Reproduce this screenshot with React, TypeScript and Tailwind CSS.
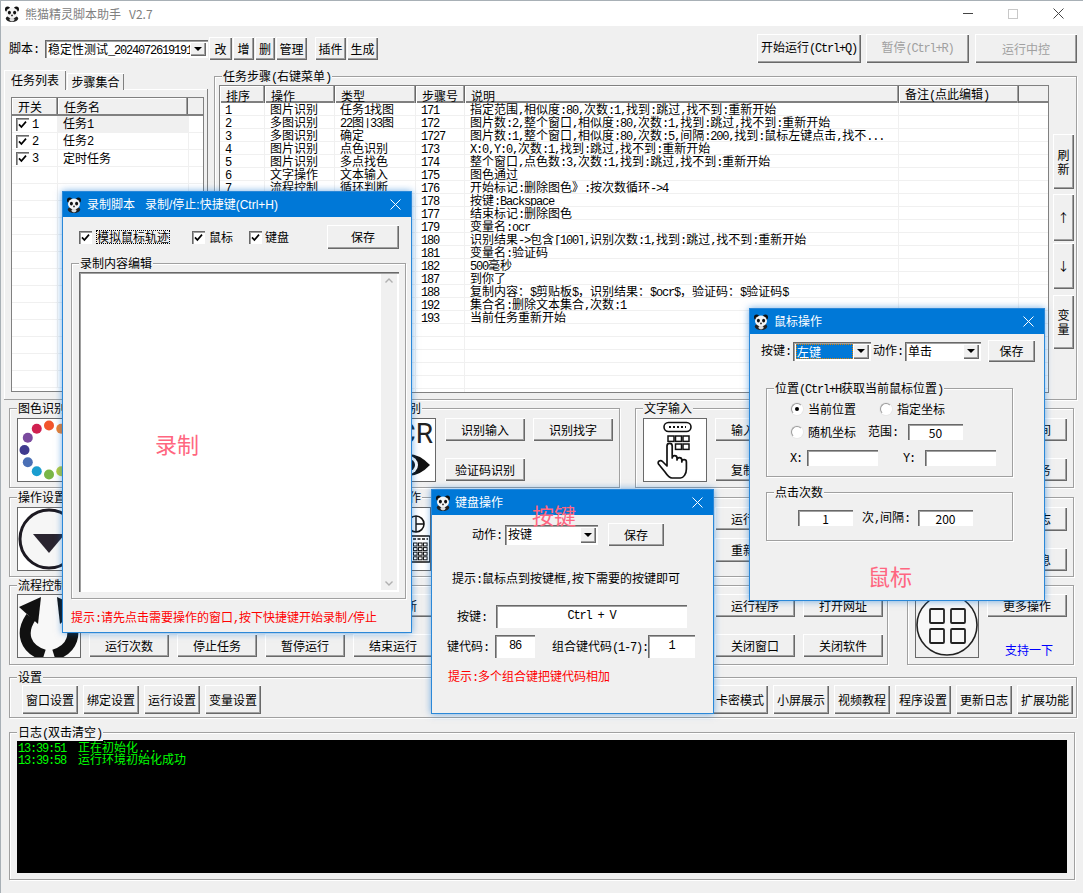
import type { ReactNode } from "react";

const mono = "font-['Liberation_Mono',monospace] text-[12px] tracking-[-1.2px]";
const raised =
  "shadow-[inset_1px_1px_0_#fff,inset_-1px_-1px_0_#696969,inset_-2px_-2px_0_#a0a0a0]";
const sunken =
  "shadow-[inset_1px_1px_0_#696969,inset_2px_2px_0_#a0a0a0,inset_-1px_-1px_0_#fff]";

function Txt({ s }: { s: string }) {
  const parts = s.split(/([\x20-\x7e]+)/);
  return (
    <span className="whitespace-pre">
      {parts.map((p, i) =>
        /^[\x20-\x7e]+$/.test(p) ? (
          <span key={i} className={mono}>
            {p}
          </span>
        ) : (
          <span key={i}>{p}</span>
        )
      )}
    </span>
  );
}

function Btn({
  label,
  className = "",
  disabled = false,
}: {
  label: string;
  className?: string;
  disabled?: boolean;
}) {
  return (
    <div
      className={`flex shrink-0 items-center justify-center whitespace-nowrap bg-[#f0f0f0] pb-[1px] leading-[13px] ${raised} ${
        disabled ? "text-[#a0a0a0]" : "text-black"
      } ${className}`}
    >
      <Txt s={label} />
    </div>
  );
}

function StackBtn({ label, className = "" }: { label: string; className?: string }) {
  return (
    <div className={`flex shrink-0 items-center justify-center bg-[#f0f0f0] ${raised} ${className}`}>
      <span className="w-[12px] leading-[14px]">{label}</span>
    </div>
  );
}

function Group({
  title,
  className = "",
  children,
}: {
  title: string;
  className?: string;
  children?: ReactNode;
}) {
  return (
    <div
      className={`relative shrink-0 border border-[#a0a0a0] shadow-[1px_1px_0_#fff,inset_1px_1px_0_#fff] ${className}`}
    >
      {title && (
        <span className="absolute left-[7px] top-[-8px] whitespace-nowrap bg-[#f0f0f0] px-[1px] leading-[14px]">
          <Txt s={title} />
        </span>
      )}
      {children}
    </div>
  );
}

function IconBox({ children }: { children: ReactNode }) {
  return (
    <div className="relative h-[64px] w-[64px] shrink-0 overflow-hidden border border-[#696969] bg-white">
      {children}
    </div>
  );
}

function Panda({ className = "h-[16px] w-[16px]" }: { className?: string }) {
  return (
    <svg viewBox="0 0 16 16" className={`shrink-0 ${className}`}>
      <circle cx="3.6" cy="3.2" r="2.6" fill="#111" />
      <circle cx="12.4" cy="3.2" r="2.6" fill="#111" />
      <ellipse cx="8" cy="12.6" rx="6.2" ry="3.4" fill="#222" />
      <ellipse cx="8" cy="7" rx="6" ry="5.4" fill="#f4f4f4" />
      <ellipse cx="5.4" cy="6.6" rx="1.5" ry="1.9" fill="#111" />
      <ellipse cx="10.6" cy="6.6" rx="1.5" ry="1.9" fill="#111" />
      <circle cx="8" cy="9.4" r="0.9" fill="#222" />
      <ellipse cx="8" cy="13.6" rx="2.6" ry="1.8" fill="#ddd" />
    </svg>
  );
}

function CloseX({ className = "stroke-white" }: { className?: string }) {
  return (
    <svg viewBox="0 0 11 11" className={`h-[11px] w-[11px] ${className}`} strokeWidth="1">
      <path d="M0.5 0.5 L10.5 10.5 M10.5 0.5 L0.5 10.5" />
    </svg>
  );
}

function Check() {
  return (
    <div className={`flex h-[13px] w-[13px] shrink-0 items-center justify-center bg-white ${sunken}`}>
      <svg viewBox="0 0 9 9" className="h-[9px] w-[9px]" fill="none" stroke="#000" strokeWidth="1.7">
        <path d="M1 4.4 L3.4 7 L8 1.6" />
      </svg>
    </div>
  );
}

function Radio({ on = false }: { on?: boolean }) {
  return (
    <div className="flex h-[12px] w-[12px] shrink-0 items-center justify-center rounded-full border border-[#9a9a9a] border-b-white border-r-white bg-white shadow-[0_0_0_1px_#e8e8e8]">
      {on && <div className="h-[4px] w-[4px] rounded-full bg-black" />}
    </div>
  );
}

function Combo({
  text,
  className = "",
  selected = false,
}: {
  text: string;
  className?: string;
  selected?: boolean;
}) {
  return (
    <div className={`flex shrink-0 items-stretch bg-white p-[2px] ${sunken} ${className}`}>
      <div className="min-w-0 flex-1 overflow-x-clip whitespace-nowrap pl-[1px] leading-[14px]">
        {selected ? (
          <div className="h-full border border-dotted border-[#e08000] bg-[#0078d7] leading-[13px] text-white">
            <Txt s={text} />
          </div>
        ) : (
          <Txt s={text} />
        )}
      </div>
      <div className={`flex w-[16px] shrink-0 items-center justify-center bg-[#f0f0f0] ${raised}`}>
        <svg viewBox="0 0 8 4" className="h-[4px] w-[8px]">
          <path d="M0 0 H8 L4 4 Z" fill="#000" />
        </svg>
      </div>
    </div>
  );
}

function Field({ text = "", className = "", mon = false }: { text?: string; className?: string; mon?: boolean }) {
  return (
    <div className={`flex shrink-0 items-center justify-center whitespace-pre bg-white leading-[13px] ${sunken} ${mon ? mono : ""} ${className}`}>
      {text}
    </div>
  );
}

function Dialog({
  title,
  className = "",
  children,
  iconGap = "ml-[5px]",
}: {
  title: ReactNode;
  className?: string;
  children: ReactNode;
  iconGap?: string;
}) {
  return (
    <div
      className={`absolute flex flex-col border border-[#2b88d8] bg-[#f0f0f0] shadow-[0_0_7px_rgba(0,110,210,0.55)] ${className}`}
    >
      <div className="flex h-[25px] shrink-0 items-center bg-[#0078d7] pl-[3px] pr-[10px] text-white">
        <Panda />
        <div className={`flex-1 whitespace-pre font-['Liberation_Sans','Noto_Sans_CJK_SC',sans-serif] ${iconGap}`}>{title}</div>
        <CloseX />
      </div>
      {children}
    </div>
  );
}

const steps: [string, string, string, string, string][] = [
  ["1", "图片识别", "任务1找图", "171", "指定范围,相似度:80,次数:1,找到:跳过,找不到:重新开始"],
  ["2", "多图识别", "22图|33图", "172", "图片数:2,整个窗口,相似度:80,次数:1,找到:跳过,找不到:重新开始"],
  ["3", "多图识别", "确定", "1727", "图片数:1,整个窗口,相似度:80,次数:5,间隔:200,找到:鼠标左键点击,找不..."],
  ["4", "图片识别", "点色识别", "173", "X:0,Y:0,次数:1,找到:跳过,找不到:重新开始"],
  ["5", "图片识别", "多点找色", "174", "整个窗口,点色数:3,次数:1,找到:跳过,找不到:重新开始"],
  ["6", "文字操作", "文本输入", "175", "图色通过"],
  ["7", "流程控制", "循环判断", "176", "开始标记:删除图色》:按次数循环->4"],
  ["8", "键鼠操作", "按键", "178", "按键:Backspace"],
  ["9", "流程控制", "循环判断", "177", "结束标记:删除图色"],
  ["10", "变量操作", "变量", "179", "变量名:ocr"],
  ["11", "文字识别", "识别", "180", "识别结果->包含[100],识别次数:1,找到:跳过,找不到:重新开始"],
  ["12", "变量操作", "变量", "181", "变量名:验证码"],
  ["13", "等待", "等待", "182", "500毫秒"],
  ["14", "文字操作", "文本", "187", "到你了"],
  ["15", "文字操作", "复制", "188", "复制内容：$剪贴板$，识别结果：$ocr$，验证码：$验证码$"],
  ["16", "集合", "集合", "192", "集合名:删除文本集合,次数:1"],
  ["17", "流程控制", "重新开始", "193", "当前任务重新开始"],
];

const stepCols = "grid grid-cols-[45px_70px_81px_49px_434px_120px_1fr]";
const headCell =
  "flex items-center border-r border-r-[#696969] pl-[6px] pt-[1px] leading-[13px] shadow-[inset_-1px_0_0_#a0a0a0,inset_1px_1px_0_#fff]";
const bodyCell = "overflow-hidden whitespace-nowrap border-r border-[#f0f0f0] pl-[5px]";

function StepTable() {
  const blanks = Array.from({ length: 6 });
  return (
    <div className="flex h-[308px] w-[830px] shrink-0 flex-col overflow-hidden border border-[#808080] bg-white">
      <div className={`${stepCols} h-[17px] shrink-0 border-b-2 border-b-[#808080] bg-[#f0f0f0]`}>
        {["排序", "操作", "类型", "步骤号", "说明"].map((h) => (
          <div key={h} className={headCell}>
            {h}
          </div>
        ))}
        <div className={headCell}>
          <Txt s="备注(点此编辑)" />
        </div>
        <div />
      </div>
      {steps.map((r) => (
        <div key={r[0]} className={`${stepCols} h-[13px] shrink-0 border-b border-[#f0f0f0] leading-[12px]`}>
          {r.map((c, i) => (
            <div key={i} className={bodyCell}>
              <Txt s={c} />
            </div>
          ))}
          <div className={bodyCell} />
          <div />
        </div>
      ))}
      {blanks.map((_, i) => (
        <div key={i} className={`${stepCols} h-[13px] shrink-0 border-b border-[#f0f0f0]`}>
          <div className={bodyCell} />
          <div className={bodyCell} />
          <div className={bodyCell} />
          <div className={bodyCell} />
          <div className={bodyCell} />
          <div className={bodyCell} />
          <div />
        </div>
      ))}
    </div>
  );
}

function TaskList() {
  const rows = [
    { n: "1", t: "任务1", on: true },
    { n: "2", t: "任务2", on: true },
    { n: "3", t: "定时任务", on: true },
  ];
  const blanks = Array.from({ length: 13 });
  const cols = "grid grid-cols-[46px_130px_1fr]";
  return (
    <div className="ml-[7px] mt-[8px] flex h-[295px] w-[193px] flex-col overflow-hidden border border-[#808080] bg-white">
      <div className={`${cols} h-[18px] shrink-0 border-b-2 border-b-[#808080] bg-[#f0f0f0]`}>
        <div className={headCell}>开关</div>
        <div className={headCell}>
          <Txt s="任务名" />
        </div>
        <div />
      </div>
      {rows.map((r, i) => (
        <div key={r.n} className={`${cols} h-[17px] shrink-0 border-b border-[#f0f0f0]`}>
          <div className="flex items-center border-r border-[#f0f0f0] pl-[4px]">
            <Check />
            <span className="ml-[3px]">
              <Txt s={r.n} />
            </span>
          </div>
          <div className={`flex items-center pl-[5px] ${i === 0 ? "bg-[#f0f0f0]" : ""}`}>
            <Txt s={r.t} />
          </div>
          <div className="border-l border-[#f0f0f0]" />
        </div>
      ))}
      {blanks.map((_, i) => (
        <div key={i} className={`${cols} h-[17px] shrink-0 border-b border-[#f0f0f0]`}>
          <div className="border-r border-[#f0f0f0]" />
          <div />
          <div className="border-l border-[#f0f0f0]" />
        </div>
      ))}
    </div>
  );
}

function ColorWheel() {
  const colors = [
    "#f2552c",
    "#f0802e",
    "#f5b82c",
    "#e8e040",
    "#c8d840",
    "#b5cc3c",
    "#7ab648",
    "#1a9ed0",
    "#4a6fb5",
    "#3f3a8f",
    "#7a4a9e",
    "#d02050",
  ];
  return (
    <svg viewBox="0 0 62 62" className="h-full w-full">
      {colors.map((c, i) => {
        const a = (i * Math.PI) / 6;
        return <circle key={c} cx={31 + 24.5 * Math.sin(a)} cy={31 - 24.5 * Math.cos(a)} r="5" fill={c} />;
      })}
    </svg>
  );
}

function OpIcon() {
  return (
    <svg viewBox="0 0 62 62" className="h-full w-full">
      <circle cx="31" cy="31" r="29" fill="#f6f6f6" stroke="#1d1a22" strokeWidth="3" />
      <path d="M15 26 H47 L31 45 Z" fill="#2a2530" />
    </svg>
  );
}

function FlowIcon() {
  return (
    <svg viewBox="0 0 62 62" className="h-full w-full bg-[#f8f8f8]">
      <g fill="none" stroke="#111" strokeWidth="11">
        <path d="M13 22 C2 38 7 54 26 60" />
        <path d="M49 22 C60 38 55 54 36 60" />
      </g>
      <path d="M1 12 L23 2 L20 29 Z" fill="#111" />
      <path d="M61 12 L39 2 L42 29 Z" fill="#111" />
    </svg>
  );
}

function OcrIcon() {
  return (
    <>
      <div className="absolute right-[2px] top-[-1px] font-['Roboto',sans-serif] text-[28px] leading-[32px] text-[#222]">
        OCR
      </div>
      <svg viewBox="0 0 62 62" className="absolute left-0 top-0 h-full w-full">
        <path d="M12 46 Q36 24 57 46 Q36 68 12 46 Z" fill="#111" />
        <circle cx="36" cy="46" r="9" fill="#fff" />
        <circle cx="36" cy="46" r="6" fill="#111" />
      </svg>
    </>
  );
}

function MouseKeysIcon() {
  const cells = Array.from({ length: 12 });
  return (
    <svg viewBox="0 0 62 62" className="h-full w-full">
      <circle cx="48" cy="16" r="8" fill="#fff" stroke="#111" strokeWidth="1.6" />
      <path d="M48 8 V24 M48 16 H56" stroke="#111" strokeWidth="1.4" />
      <rect x="43" y="28" width="19" height="26" rx="1" fill="#fff" stroke="#111" strokeWidth="1.6" />
      <path d="M45 31 H60" stroke="#111" strokeWidth="1.6" strokeDasharray="3 1.5" />
      {cells.map((_, i) => (
        <rect
          key={i}
          x={45.5 + (i % 3) * 5}
          y={35 + Math.floor(i / 3) * 4.6}
          width="3.6"
          height="3"
          fill="none"
          stroke="#111"
          strokeWidth="1"
        />
      ))}
    </svg>
  );
}

function HandKeypad() {
  return (
    <svg viewBox="0 0 62 62" className="h-full w-full">
      <rect x="20" y="3.5" width="27" height="9" rx="4.5" fill="none" stroke="#111" strokeWidth="1.6" />
      <path d="M25 8 H42" stroke="#111" strokeWidth="2" strokeDasharray="2 2" />
      <g fill="none" stroke="#111" strokeWidth="1.5">
        <rect x="24" y="17" width="6" height="5.4" />
        <rect x="31.5" y="17" width="6" height="5.4" />
        <rect x="39" y="17" width="6" height="5.4" />
        <rect x="31.5" y="25" width="6" height="5.4" />
        <rect x="39" y="25" width="6" height="5.4" />
      </g>
      <path
        d="M23 47 V27 a2.6 2.6 0 0 1 5.2 0 V39 a2.4 2.4 0 0 1 4.8 0 V41 a2.4 2.4 0 0 1 4.8 0 V43 a2.3 2.3 0 0 1 4.6 0 V50 c0 5 -3 9 -6 9 H28 c-3 0 -5 -3 -7 -6 L14.5 45 c-1.5 -2.5 2 -4.5 4 -2.5 L23 47 Z"
        fill="#fff"
        stroke="#111"
        strokeWidth="1.7"
        strokeLinejoin="round"
      />
    </svg>
  );
}

function GridIcon() {
  return (
    <svg viewBox="0 0 62 62" className="h-full w-full bg-[#f0f0f0]">
      <circle cx="31" cy="30" r="30" fill="#f8f8f8" stroke="#222" strokeWidth="1.6" />
      <g fill="none" stroke="#222" strokeWidth="1.8">
        <rect x="14" y="14" width="14" height="14" rx="1" />
        <rect x="35" y="14" width="14" height="14" rx="1" />
        <rect x="14" y="34" width="14" height="14" rx="1" />
        <rect x="35" y="34" width="14" height="14" rx="1" />
      </g>
    </svg>
  );
}

function ToolGroups() {
  return (
    <div className="ml-[8px] flex w-[1068px] flex-col">
      {/* 第一行 */}
      <div className="mt-[8px] flex h-[80px] items-start">
        <Group title="图色识别" className="h-[80px] w-[343px] pl-[7px] pt-[9px]">
          <IconBox>
            <ColorWheel />
          </IconBox>
        </Group>
        <Group title="文字识别" className="ml-[12px] flex h-[80px] w-[256px] pl-[7px] pt-[9px]">
          <IconBox>
            <OcrIcon />
          </IconBox>
          <div className="ml-[9px] grid grid-cols-[80px_80px] grid-rows-[23px_23px] gap-x-[8px] gap-y-[17px]">
            <Btn label="识别输入" />
            <Btn label="识别找字" />
            <Btn label="验证码识别" />
          </div>
        </Group>
        <Group title="文字输入" className="ml-[15px] flex h-[80px] w-[260px] pl-[7px] pt-[9px]">
          <IconBox>
            <HandKeypad />
          </IconBox>
          <div className="ml-[8px] grid grid-cols-[80px_80px] grid-rows-[23px_23px] gap-x-[8px] gap-y-[17px]">
            <Btn label="输入文本" />
            <Btn label="文本比较" />
            <Btn label="复制文本" />
            <Btn label="粘贴文本" />
          </div>
        </Group>
        <Group title="等待" className="ml-[12px] flex h-[80px] w-[167px] pl-[7px] pt-[9px]">
          <IconBox>
            <GridIcon />
          </IconBox>
          <div className="ml-[8px] grid grid-rows-[23px_23px] gap-y-[17px]">
            <Btn label="等待时间" className="w-[80px]" />
            <Btn label="切换任务" className="w-[80px]" />
          </div>
        </Group>
      </div>
      {/* 第二行 */}
      <div className="mt-[9px] flex h-[80px] items-start">
        <Group title="操作设置" className="h-[80px] w-[343px] pl-[7px] pt-[9px]">
          <IconBox>
            <OpIcon />
          </IconBox>
        </Group>
        <Group title="键鼠操作" className="ml-[12px] flex h-[80px] w-[524px] justify-between pl-[2px] pr-[4px] pt-[9px]">
          <IconBox>
            <MouseKeysIcon />
          </IconBox>
          <div className="grid grid-cols-[80px_80px] grid-rows-[23px_24px] gap-x-[8px] gap-y-[8px]">
            <Btn label="运行脚本" />
            <Btn label="暂停脚本" />
            <Btn label="重新运行" />
            <Btn label="结束脚本" />
          </div>
        </Group>
        <Group title="其他" className="ml-[19px] flex h-[80px] w-[167px] pl-[7px] pt-[9px]">
          <IconBox>
            <GridIcon />
          </IconBox>
          <div className="ml-[8px] flex flex-col">
            <Btn label="输出日志" className="h-[24px] w-[80px]" />
            <Btn label="弹窗消息" className="mt-[17px] h-[23px] w-[80px]" />
          </div>
        </Group>
      </div>
      {/* 第三行 */}
      <div className="mt-[8px] flex h-[80px] items-start">
        <Group title="流程控制" className="flex h-[80px] w-[879px] justify-between pl-[7px] pr-[4px] pt-[8px]">
          <div className="flex">
            <IconBox>
              <FlowIcon />
            </IconBox>
            <div className="ml-[8px] grid grid-cols-[repeat(4,80px)] grid-rows-[23px_23px] gap-x-[8px] gap-y-[17px]">
              <Btn label="循环次数" />
              <Btn label="循环时间" />
              <Btn label="条件判断" />
              <Btn label="循环判断" />
              <Btn label="运行次数" />
              <Btn label="停止任务" />
              <Btn label="暂停运行" />
              <Btn label="结束运行" />
            </div>
          </div>
          <div className="grid grid-cols-[80px_80px] grid-rows-[23px_23px] gap-x-[8px] gap-y-[17px]">
            <Btn label="运行程序" />
            <Btn label="打开网址" />
            <Btn label="关闭窗口" />
            <Btn label="关闭软件" />
          </div>
        </Group>
        <Group title="" className="ml-[19px] flex h-[80px] w-[167px] pl-[7px] pt-[8px]">
          <IconBox>
            <GridIcon />
          </IconBox>
          <div className="ml-[8px] flex flex-col">
            <Btn label="更多操作" className="h-[23px] w-[80px]" />
            <span className="ml-[18px] mt-[26px] leading-[13px] text-[#0000ff]">支持一下</span>
          </div>
        </Group>
      </div>
    </div>
  );
}

export default function App() {
  const leftSettings = ["窗口设置", "绑定设置", "运行设置", "变量设置"];
  const rightSettings = ["卡密模式", "小屏展示", "视频教程", "程序设置", "更新日志", "扩展功能"];
  return (
    <div className="relative h-[893px] w-[1083px] overflow-hidden border-l border-t border-[#a8b0b6] bg-[#f0f0f0] font-['Noto_Sans_CJK_SC','Liberation_Sans',sans-serif] text-[12px] leading-[14px] text-black">
      {/* 标题栏 */}
      <div className="flex h-[25px] items-center bg-white pl-[3px] pr-[19px] text-[#808080]">
        <Panda />
        <span className="ml-[5px] whitespace-pre">熊猫精灵脚本助手   V2.7</span>
        <div className="ml-auto flex items-center">
          <div className="h-[1px] w-[10px] bg-[#444]" />
          <div className="ml-[35px] h-[10px] w-[10px] border border-[#c8c8c8]" />
          <div className="ml-[35px]">
            <CloseX className="stroke-[#444]" />
          </div>
        </div>
      </div>

      {/* 工具栏 */}
      <div className="mt-[8px] flex h-[29px] items-center pl-[8px] pr-[6px]">
        <span className="w-[36px]">
          <Txt s="脚本:" />
        </span>
        <Combo text="稳定性测试_2024072619191" className="h-[18px] w-[163px]" />
        <Btn label="改" className="ml-[1px] h-[23px] w-[23px]" />
        <Btn label="增" className="ml-[1px] h-[23px] w-[21px]" />
        <Btn label="删" className="ml-[1px] h-[23px] w-[20px]" />
        <Btn label="管理" className="ml-[1px] h-[23px] w-[31px]" />
        <Btn label="插件" className="ml-[8px] h-[23px] w-[31px]" />
        <Btn label="生成" className="ml-[1px] h-[23px] w-[31px]" />
        <Btn label="开始运行(Ctrl+Q)" className="ml-auto h-[29px] w-[104px]" />
        <Btn label="暂停(Ctrl+R)" disabled className="ml-[5px] h-[29px] w-[103px]" />
        <Btn label="运行中控" disabled className="ml-[6px] h-[29px] w-[102px]" />
      </div>

      {/* 任务列表 + 任务步骤 */}
      <div className="mt-[7px] flex h-[330px] pl-[3px]">
        <div className="flex w-[204px] flex-col">
          <div className="z-10 -mb-[1px] flex h-[20px] items-end">
            <div className="flex h-[20px] w-[62px] items-center justify-center bg-[#f0f0f0] shadow-[inset_1px_1px_0_#fff,inset_-1px_0_0_#808080]">
              任务列表
            </div>
            <div className="ml-[1px] flex h-[17px] w-[57px] items-center justify-center bg-[#f0f0f0] shadow-[inset_1px_1px_0_#fff,inset_-1px_0_0_#808080]">
              步骤集合
            </div>
          </div>
          <div className="flex-1 border-b border-b-[#a0a0a0] border-r border-r-[#808080] shadow-[inset_1px_1px_0_#fff]">
            <TaskList />
          </div>
        </div>
        <Group
          title="任务步骤(右键菜单)"
          className="ml-[6px] mt-[6px] flex h-[324px] w-[863px] pl-[4px] pt-[8px]"
        >
          <StepTable />
          <div className="ml-[4px] flex flex-col">
            <StackBtn label="刷新" className="mt-[49px] h-[55px] w-[21px]" />
            <Btn label="↑" className="mt-[5px] h-[47px] w-[21px]" />
            <Btn label="↓" className="mt-[2px] h-[46px] w-[21px]" />
            <StackBtn label="变量" className="mt-[6px] h-[54px] w-[21px]" />
          </div>
        </Group>
      </div>

      <ToolGroups />

      {/* 设置 */}
      <Group title="设置" className="ml-[8px] mt-[12px] flex h-[41px] w-[1068px] pl-[12px] pr-[3px] pt-[7px]">
        <div className="flex gap-[5px]">
          {leftSettings.map((s) => (
            <Btn key={s} label={s} className="h-[29px] w-[56px]" />
          ))}
        </div>
        <div className="ml-auto flex gap-[5px]">
          {rightSettings.map((s) => (
            <Btn key={s} label={s} className="h-[29px] w-[56px]" />
          ))}
        </div>
      </Group>

      {/* 日志 */}
      <Group title="日志(双击清空)" className="ml-[8px] mt-[14px] h-[148px] w-[1066px] pl-[7px] pt-[7px]">
        <div className="h-[133px] w-[1050px] bg-black pl-[1px] pt-[1px] text-[#00ff00]">
          <div className="h-[12px] leading-[12px]">
            <Txt s="13:39:51  " />
            正在初始化
            <Txt s="..." />
          </div>
          <div className="h-[12px] leading-[12px]">
            <Txt s="13:39:58  " />
            运行环境初始化成功
          </div>
        </div>
      </Group>

      {/* 录制脚本 */}
      <Dialog
        className="left-[61px] top-[190px] h-[442px] w-[350px]"
        title={<span>录制脚本   录制/停止:快捷键(Ctrl+H)</span>}
      >
        <div className="ml-[16px] mt-[8px] flex h-[24px] items-center">
          <Check />
          <span className="ml-[4px] border border-dotted border-black leading-[12px]">模拟鼠标轨迹</span>
          <div className="ml-[22px]">
            <Check />
          </div>
          <span className="ml-[4px]">鼠标</span>
          <div className="ml-[16px]">
            <Check />
          </div>
          <span className="ml-[3px]">键盘</span>
          <Btn label="保存" className="ml-[38px] h-[24px] w-[72px]" />
        </div>
        <Group title="录制内容编辑" className="ml-[8px] mt-[14px] h-[336px] w-[335px] pl-[7px] pt-[8px]">
          <div className={`relative flex h-[320px] w-[320px] justify-end bg-white p-[2px] ${sunken}`}>
            <div className="flex w-[16px] flex-col items-center justify-between bg-[#f0f0f0] py-[4px]">
              <svg viewBox="0 0 8 5" className="h-[5px] w-[8px]" fill="none" stroke="#b0b0b0" strokeWidth="1.4">
                <path d="M0.5 4.5 L4 1 L7.5 4.5" />
              </svg>
              <svg viewBox="0 0 8 5" className="h-[5px] w-[8px]" fill="none" stroke="#b0b0b0" strokeWidth="1.4">
                <path d="M0.5 0.5 L4 4 L7.5 0.5" />
              </svg>
            </div>
            <span className="absolute left-[76px] top-[156px] text-[22px] leading-[30px] text-[#ff6680]">录制</span>
          </div>
        </Group>
        <div className="ml-[8px] mt-[11px] whitespace-nowrap text-[#ff0000]">
          <Txt s="提示:请先点击需要操作的窗口,按下快捷键开始录制/停止" />
        </div>
      </Dialog>

      {/* 键盘操作 */}
      <Dialog className="left-[430px] top-[488px] h-[225px] w-[283px]" iconGap="ml-[4px]" title="键盘操作">
        <span className="absolute left-[100px] top-[9px] text-[22px] leading-[30px] text-[#ff6680]">按键</span>
        <div className="ml-[40px] mt-[8px] flex h-[23px] items-center">
          <span className="w-[33px]">
            <Txt s="动作:" />
          </span>
          <Combo text="按键" className="h-[20px] w-[93px]" />
          <Btn label="保存" className="ml-[10px] h-[23px] w-[56px]" />
        </div>
        <div className="ml-[20px] mt-[25px] whitespace-nowrap">
          <Txt s="提示:鼠标点到按键框,按下需要的按键即可" />
        </div>
        <div className="ml-[25px] mt-[18px] flex h-[23px] items-center">
          <span className="w-[39px]">
            <Txt s="按键:" />
          </span>
          <Field text="Ctrl + V" mon className="h-[23px] w-[191px]" />
        </div>
        <div className="ml-[15px] mt-[7px] flex h-[23px] items-center">
          <span className="w-[48px]">
            <Txt s="键代码:" />
          </span>
          <Field text="86" mon className="h-[23px] w-[40px]" />
          <span className="ml-[17px] w-[96px] whitespace-nowrap">
            <Txt s="组合键代码(1-7):" />
          </span>
          <Field text="1" mon className="h-[23px] w-[47px]" />
        </div>
        <div className="ml-[16px] mt-[11px] whitespace-nowrap text-[#ff0000]">
          <Txt s="提示:多个组合键把键代码相加" />
        </div>
      </Dialog>

      {/* 鼠标操作 */}
      <Dialog className="left-[748px] top-[307px] h-[293px] w-[296px]" title="鼠标操作">
        <span className="absolute left-[118px] top-[251px] text-[22px] leading-[30px] text-[#ff6680]">鼠标</span>
        <div className="ml-[11px] mt-[6px] flex h-[22px] items-center">
          <span className="w-[32px]">
            <Txt s="按键:" />
          </span>
          <Combo text="左键" selected className="h-[19px] w-[78px]" />
          <span className="ml-[2px] w-[32px]">
            <Txt s="动作:" />
          </span>
          <Combo text="单击" className="h-[19px] w-[76px]" />
          <Btn label="保存" className="ml-[7px] h-[22px] w-[47px]" />
        </div>
        <Group title="位置(Ctrl+H获取当前鼠标位置)" className="ml-[16px] mt-[26px] h-[89px] w-[247px] pl-[24px]">
          <div className="mt-[13px] flex h-[14px] items-center">
            <div className="flex w-[89px] items-center">
              <Radio on />
              <span className="ml-[5px]">当前位置</span>
            </div>
            <Radio />
            <span className="ml-[5px]">指定坐标</span>
          </div>
          <div className="mt-[8px] flex h-[16px] items-center">
            <div className="flex w-[77px] items-center">
              <Radio />
              <span className="ml-[5px]">随机坐标</span>
            </div>
            <span className="w-[40px]">
              <Txt s="范围:" />
            </span>
            <Field text="50" className="h-[16px] w-[55px]" />
          </div>
          <div className="mt-[10px] flex h-[16px] items-center">
            <span className="-ml-[1px] w-[17px]">
              <Txt s="X:" />
            </span>
            <Field className="h-[16px] w-[71px]" />
            <span className="ml-[25px] w-[22px]">
              <Txt s="Y:" />
            </span>
            <Field className="h-[16px] w-[71px]" />
          </div>
        </Group>
        <Group title="点击次数" className="ml-[16px] mt-[15px] h-[49px] w-[247px] pl-[31px]">
          <div className="mt-[17px] flex h-[16px] items-center">
            <Field text="1" className="h-[16px] w-[55px]" />
            <span className="ml-[9px] w-[56px]">
              <Txt s="次,间隔:" />
            </span>
            <Field text="200" className="h-[16px] w-[55px]" />
          </div>
        </Group>
      </Dialog>
    </div>
  );
}
